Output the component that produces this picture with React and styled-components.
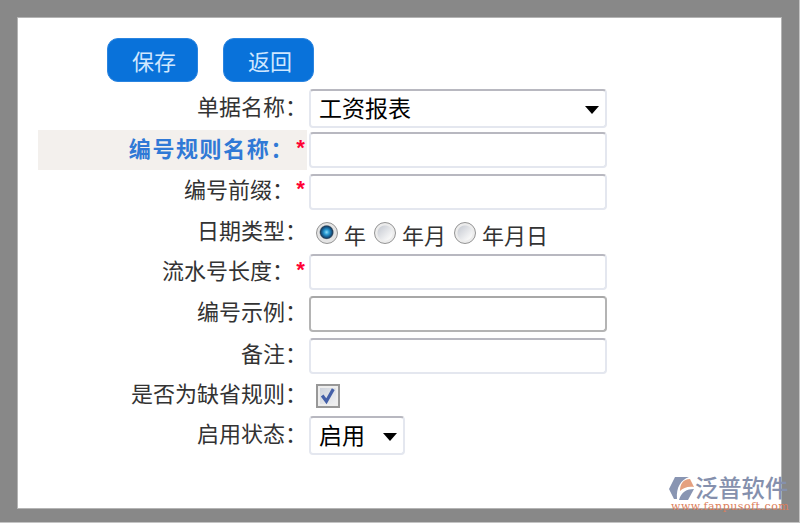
import React from 'react';
import styled, { createGlobalStyle } from 'styled-components';

const App = () => {
  return (
    <Container>
        <GlobalStyle />
        <Panel>
            <Toolbar>
                <Button>保存</Button>
                <Button>返回</Button>
            </Toolbar>
            <Form>
                <Row height={42}>
                    <Label>单据名称：</Label>
                    <Control top={1}><Dropdown width={298} value='工资报表' /></Control>
                </Row>
                <Row height={41}>
                    <Label active>编号规则名称：<Star>*</Star></Label>
                    <Control top={2}><Input /></Control>
                </Row>
                <Row height={41}>
                    <Label>编号前缀：<Star>*</Star></Label>
                    <Control top={3}><Input /></Control>
                </Row>
                <Row height={40}>
                    <Label>日期类型：</Label>
                    <Control top={9}>
                        <RadioItem gap={8}><Radio defaultChecked />年</RadioItem>
                        <RadioItem gap={8}><Radio />年月</RadioItem>
                        <RadioItem gap={0}><Radio />年月日</RadioItem>
                    </Control>
                </Row>
                <Row height={41}>
                    <Label>流水号长度：<Star>*</Star></Label>
                    <Control top={2}><Input /></Control>
                </Row>
                <Row height={42}>
                    <Label>编号示例：</Label>
                    <Control top={3}><Input dark='true' /></Control>
                </Row>
                <Row height={40}>
                    <Label>备注：</Label>
                    <Control top={3}><Input /></Control>
                </Row>
                <Row height={40}>
                    <Label>是否为缺省规则：</Label>
                    <Control top={9}>
                        <CheckBox>
                            <svg width='18' height='18' viewBox='0 0 17 17'>
                                <path d='M3 8 L7 13.5 L13.5 2' fill='none' stroke='#4460a8' strokeWidth='3' />
                            </svg>
                        </CheckBox>
                    </Control>
                </Row>
                <Row height={41}>
                    <Label>启用状态：</Label>
                    <Control top={1}><Dropdown width={96} value='启用' /></Control>
                </Row>
            </Form>
        </Panel>
        <Brand>
            <BrandTop>
                <svg width='26' height='24' viewBox='0 0 26 24'>
                    <path d='M6 0 H20 C12 3 7 10 8 22 L5 22 L0 12 Z' fill='#8995b2' />
                    <path d='M11 14 C11 7 14 2 21 2 L25 10 C19 9 14 11 11 14 Z' fill='#e5a07f' />
                    <path d='M10 23 C12 15 18 12 25 12 L19 23 Z' fill='#8995b2' />
                </svg>
                <BrandName>泛普软件</BrandName>
            </BrandTop>
            <BrandUrl>www.fanpusoft.com</BrandUrl>
        </Brand>
    </Container>
  );
};

const Dropdown = ({ width, value }) => {
  return (
    <SelectBox width={width}>
        {value}
        <Arrow width='14' height='8' viewBox='0 0 14 8'>
            <path d='M0 0 H14 L7 8 Z' fill='#000' />
        </Arrow>
    </SelectBox>
  );
};

const GlobalStyle = createGlobalStyle`
    * {
        box-sizing: border-box;
    }

    body {
        margin: 0;
        font-family: "Noto Sans CJK SC", sans-serif;
        background-color: #888;
    }
`;

const Container = styled.section`
    position: relative;
    width: 800px;
    height: 523px;
    padding: 17px 18px 14px 17px;
    background-color: #888;
    border-right: 1px solid #c4c4c4;
    border-bottom: 1px solid #c4c4c4;
    overflow: hidden;
`;

const Panel = styled.div`
    height: 492px;
    padding: 20px 20px 0;
    background-color: #fff;
    border: 1px solid #b4b4b4;
    margin-right: -1px;
`;

const Toolbar = styled.div`
    display: flex;
    gap: 25px;
    padding-left: 69px;
`;

const Button = styled.button`
    width: 91px;
    height: 44px;
    padding: 0 0 1px 3px;
    border: 1px solid #2a84e0;
    border-radius: 11px;
    background-color: #0972da;
    color: #cfe7ff;
    font-family: inherit;
    font-size: 22px;
    line-height: 38px;
    cursor: pointer;
`;

const Form = styled.div`
    padding-top: 6px;
`;

const Row = styled.div`
    display: flex;
    height: ${props => props.height}px;
`;

const Label = styled.div`
    display: flex;
    justify-content: flex-end;
    width: 269px;
    height: 40px;
    font-size: 22px;
    line-height: 34px;
    white-space: nowrap;
    color: ${props => props.active ? '#3079d6' : '#333'};
    font-weight: ${props => props.active ? 700 : 400};
    letter-spacing: ${props => props.active ? '1.6px' : '0'};
    background-color: ${props => props.active ? '#f3f0ed' : 'transparent'};
`;

const Star = styled.span`
    width: 13px;
    padding-top: 4px;
    color: #ff0033;
    font-family: "Liberation Mono", monospace;
    font-size: 22px;
    font-weight: 700;
    letter-spacing: 0;
`;

const Control = styled.div`
    display: flex;
    align-items: flex-start;
    padding: ${props => props.top}px 0 0 2px;
`;

const Input = styled.input`
    width: 298px;
    height: 36px;
    padding: 0 8px;
    outline: none;
    border: 2px solid ${props => props.dark ? '#b4b4b4' : '#e4e7ef'};
    border-top-color: ${props => props.dark ? '#a8a8a8' : '#b8b8c0'};
    border-radius: 4px;
    font-size: 22px;
`;

const SelectBox = styled.div`
    display: flex;
    align-items: center;
    justify-content: space-between;
    width: ${props => props.width}px;
    height: 39px;
    padding: 0 6px 2px 8px;
    border: 2px solid #e4e7ef;
    border-top-color: #b8b8c0;
    border-radius: 4px;
    color: #000;
    font-size: 23px;
    line-height: 33px;
`;

const Arrow = styled.svg`
    margin-top: 5px;
`;

const RadioItem = styled.label`
    display: flex;
    align-items: center;
    gap: 6px;
    height: 26px;
    margin-right: ${props => props.gap}px;
    color: #333;
    font-size: 22px;
    line-height: 26px;

    &:first-child {
        margin-left: 7px;
    }
`;

const Radio = styled.input.attrs({ type: 'radio', name: 'dateType' })`
    appearance: none;
    width: 22px;
    height: 22px;
    margin: 0 0 2px;
    border: 1px solid #949494;
    border-radius: 50%;
    background: radial-gradient(circle, transparent 0 7px, #ececec 8px), linear-gradient(135deg, #b9bec8, #f8f8f8 75%);

    &:checked {
        background: radial-gradient(circle at 48% 46%, #8fdcf8 0, #2a9bd3 2.5px, #124a79 5.5px, #263f56 6.2px, #e4e4e4 7.4px);
    }
`;

const CheckBox = styled.div`
    display: flex;
    align-items: center;
    justify-content: center;
    width: 24px;
    height: 24px;
    margin-left: 7px;
    border: 2px solid #989898;
    background: linear-gradient(135deg, #c9cfd9, #f4f4f4);
    box-shadow: inset 0 0 0 2px #eee;
`;

const Brand = styled.div`
    position: absolute;
    left: 669px;
    top: 475px;
    width: 122px;
`;

const BrandTop = styled.div`
    display: flex;
    align-items: flex-start;
    height: 26px;
    padding-top: 2px;
`;

const BrandName = styled.span`
    color: #8590ad;
    font-size: 23.3px;
    font-weight: 500;
    line-height: 20px;
    white-space: nowrap;
`;

const BrandUrl = styled.div`
    padding-left: 2px;
    color: #dc7d59;
    font-family: "DejaVu Serif", serif;
    font-size: 11px;
    line-height: 11px;
    letter-spacing: 0.5px;
    white-space: nowrap;
`;

export default App;
